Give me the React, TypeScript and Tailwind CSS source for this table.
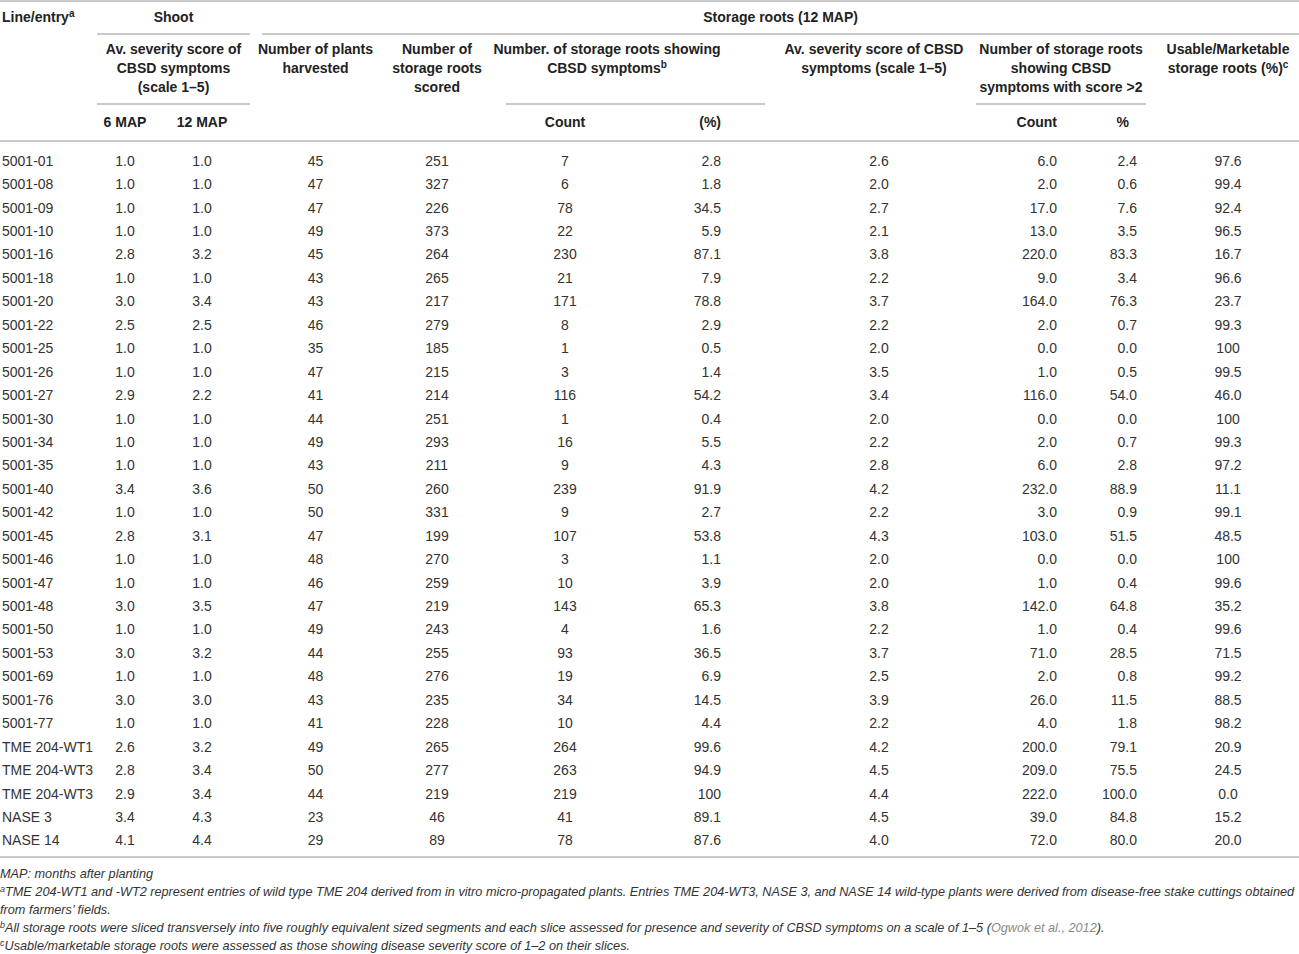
const rows: string[][] = [
  ["5001-01", "1.0", "1.0", "45", "251", "7", "2.8", "2.6", "6.0", "2.4", "97.6"],
  ["5001-08", "1.0", "1.0", "47", "327", "6", "1.8", "2.0", "2.0", "0.6", "99.4"],
  ["5001-09", "1.0", "1.0", "47", "226", "78", "34.5", "2.7", "17.0", "7.6", "92.4"],
  ["5001-10", "1.0", "1.0", "49", "373", "22", "5.9", "2.1", "13.0", "3.5", "96.5"],
  ["5001-16", "2.8", "3.2", "45", "264", "230", "87.1", "3.8", "220.0", "83.3", "16.7"],
  ["5001-18", "1.0", "1.0", "43", "265", "21", "7.9", "2.2", "9.0", "3.4", "96.6"],
  ["5001-20", "3.0", "3.4", "43", "217", "171", "78.8", "3.7", "164.0", "76.3", "23.7"],
  ["5001-22", "2.5", "2.5", "46", "279", "8", "2.9", "2.2", "2.0", "0.7", "99.3"],
  ["5001-25", "1.0", "1.0", "35", "185", "1", "0.5", "2.0", "0.0", "0.0", "100"],
  ["5001-26", "1.0", "1.0", "47", "215", "3", "1.4", "3.5", "1.0", "0.5", "99.5"],
  ["5001-27", "2.9", "2.2", "41", "214", "116", "54.2", "3.4", "116.0", "54.0", "46.0"],
  ["5001-30", "1.0", "1.0", "44", "251", "1", "0.4", "2.0", "0.0", "0.0", "100"],
  ["5001-34", "1.0", "1.0", "49", "293", "16", "5.5", "2.2", "2.0", "0.7", "99.3"],
  ["5001-35", "1.0", "1.0", "43", "211", "9", "4.3", "2.8", "6.0", "2.8", "97.2"],
  ["5001-40", "3.4", "3.6", "50", "260", "239", "91.9", "4.2", "232.0", "88.9", "11.1"],
  ["5001-42", "1.0", "1.0", "50", "331", "9", "2.7", "2.2", "3.0", "0.9", "99.1"],
  ["5001-45", "2.8", "3.1", "47", "199", "107", "53.8", "4.3", "103.0", "51.5", "48.5"],
  ["5001-46", "1.0", "1.0", "48", "270", "3", "1.1", "2.0", "0.0", "0.0", "100"],
  ["5001-47", "1.0", "1.0", "46", "259", "10", "3.9", "2.0", "1.0", "0.4", "99.6"],
  ["5001-48", "3.0", "3.5", "47", "219", "143", "65.3", "3.8", "142.0", "64.8", "35.2"],
  ["5001-50", "1.0", "1.0", "49", "243", "4", "1.6", "2.2", "1.0", "0.4", "99.6"],
  ["5001-53", "3.0", "3.2", "44", "255", "93", "36.5", "3.7", "71.0", "28.5", "71.5"],
  ["5001-69", "1.0", "1.0", "48", "276", "19", "6.9", "2.5", "2.0", "0.8", "99.2"],
  ["5001-76", "3.0", "3.0", "43", "235", "34", "14.5", "3.9", "26.0", "11.5", "88.5"],
  ["5001-77", "1.0", "1.0", "41", "228", "10", "4.4", "2.2", "4.0", "1.8", "98.2"],
  ["TME 204-WT1", "2.6", "3.2", "49", "265", "264", "99.6", "4.2", "200.0", "79.1", "20.9"],
  ["TME 204-WT3", "2.8", "3.4", "50", "277", "263", "94.9", "4.5", "209.0", "75.5", "24.5"],
  ["TME 204-WT3", "2.9", "3.4", "44", "219", "219", "100", "4.4", "222.0", "100.0", "0.0"],
  ["NASE 3", "3.4", "4.3", "23", "46", "41", "89.1", "4.5", "39.0", "84.8", "15.2"],
  ["NASE 14", "4.1", "4.4", "29", "89", "78", "87.6", "4.0", "72.0", "80.0", "20.0"],
];

// per-column cell alignment for body cells
const cellCls = [
  "text-left pl-[2px]",
  "text-center pr-[11px]",
  "text-center pr-[10px]",
  "text-center",
  "text-center",
  "text-center",
  "text-right pr-[44px]",
  "text-center pl-[17px]",
  "text-right pr-[28px]",
  "text-right pr-[9px]",
  "text-center pl-[11px]",
];

const widths = [97, 67, 86, 131, 112, 144, 128, 211, 109, 61, 153];

function Rule({ className = "" }: { className?: string }) {
  return <div className={"h-[2px] bg-[#c9c9c9] " + className} />;
}

export default function App() {
  return (
    <div className="w-[1299px] bg-white text-[#333] font-['Liberation_Sans','Helvetica_Neue',Arial,sans-serif]">
      <Rule />
      <table className="w-[1299px] table-fixed border-separate border-spacing-0">
        <colgroup>
          {widths.map((w, i) => (
            <col key={i} style={{ width: w }} />
          ))}
        </colgroup>
        <thead className="text-[14px] font-bold text-[#222] leading-[19px]">
          <tr>
            <th rowSpan={3} className="p-0 align-top text-left border-b-2 border-[#c9c9c9]">
              <div className="pl-[2px] pt-[6px] whitespace-nowrap">
                Line/entry<sup className="text-[10px] font-bold">a</sup>
              </div>
            </th>
            <th colSpan={2} className="p-0">
              <div className="h-[31px] flex items-center justify-center">Shoot</div>
              <Rule />
            </th>
            <th colSpan={8} className="p-0">
              <div className="h-[31px] flex items-center justify-center pl-[12px]">Storage roots (12 MAP)</div>
              <Rule className="ml-[12px]" />
            </th>
          </tr>
          <tr>
            <th colSpan={2} className="p-0 align-top">
              <div className="h-[68px] pt-[5px] text-center whitespace-nowrap">
                Av. severity score of
                <br />
                CBSD symptoms
                <br />
                (scale 1–5)
              </div>
              <Rule />
            </th>
            <th rowSpan={2} className="p-0 align-top border-b-2 border-[#c9c9c9]">
              <div className="pt-[5px] text-center whitespace-nowrap">
                Number of plants
                <br />
                harvested
              </div>
            </th>
            <th rowSpan={2} className="p-0 align-top border-b-2 border-[#c9c9c9]">
              <div className="pt-[5px] text-center whitespace-nowrap">
                Number of
                <br />
                storage roots
                <br />
                scored
              </div>
            </th>
            <th colSpan={2} className="p-0 align-top">
              <div className="h-[68px] pt-[5px] text-center pr-[44px] whitespace-nowrap">
                Number. of storage roots showing
                <br />
                CBSD symptoms<sup className="text-[10px] font-bold">b</sup>
              </div>
              <Rule className="ml-[13px]" />
            </th>
            <th rowSpan={2} className="p-0 align-top border-b-2 border-[#c9c9c9]">
              <div className="pt-[5px] text-center pl-[7px] whitespace-nowrap">
                Av. severity score of CBSD
                <br />
                symptoms (scale 1–5)
              </div>
            </th>
            <th colSpan={2} className="p-0 align-top">
              <div className="h-[68px] pt-[5px] text-center whitespace-nowrap">
                Number of storage roots
                <br />
                showing CBSD
                <br />
                symptoms with score &gt;2
              </div>
              <Rule />
            </th>
            <th rowSpan={2} className="p-0 align-top border-b-2 border-[#c9c9c9]">
              <div className="pt-[5px] text-center pl-[11px] whitespace-nowrap">
                Usable/Marketable
                <br />
                storage roots (%)<sup className="text-[10px] font-bold">c</sup>
              </div>
            </th>
          </tr>
          <tr>
            <th className="p-0 border-b-2 border-[#c9c9c9]">
              <div className="h-[35px] flex items-center justify-center pr-[11px]">6 MAP</div>
            </th>
            <th className="p-0 border-b-2 border-[#c9c9c9]">
              <div className="h-[35px] flex items-center justify-center pr-[10px]">12 MAP</div>
            </th>
            <th className="p-0 border-b-2 border-[#c9c9c9]">
              <div className="h-[35px] flex items-center justify-center">Count</div>
            </th>
            <th className="p-0 border-b-2 border-[#c9c9c9]">
              <div className="h-[35px] flex items-center justify-end pr-[44px]">(%)</div>
            </th>
            <th className="p-0 border-b-2 border-[#c9c9c9]">
              <div className="h-[35px] flex items-center justify-end pr-[28px]">Count</div>
            </th>
            <th className="p-0 border-b-2 border-[#c9c9c9]">
              <div className="h-[35px] flex items-center justify-end pr-[17px]">%</div>
            </th>
          </tr>
        </thead>
        <tbody className="text-[14px] leading-[16px]">
          <tr>
            <td colSpan={11} className="h-[7px] p-0" />
          </tr>
          {rows.map((r, i) => (
            <tr key={i} className="h-[23.45px]">
              {r.map((v, j) => (
                <td key={j} className={"p-0 whitespace-nowrap " + cellCls[j]}>
                  {v}
                </td>
              ))}
            </tr>
          ))}
          <tr>
            <td colSpan={11} className="h-[4px] p-0" />
          </tr>
        </tbody>
      </table>
      <Rule />
      <div className="pt-[7px] text-[12.7px] leading-[18px] italic text-[#333] whitespace-nowrap">
        <p>MAP: months after planting</p>
        <p>
          <sup className="text-[9px]">a</sup>TME 204-WT1 and -WT2 represent entries of wild type TME 204 derived from in vitro micro-propagated plants. Entries TME 204-WT3, NASE 3, and NASE 14 wild-type plants were derived from disease-free stake cuttings obtained
          <br />
          from farmers’ fields.
        </p>
        <p>
          <sup className="text-[9px]">b</sup>All storage roots were sliced transversely into five roughly equivalent sized segments and each slice assessed for presence and severity of CBSD symptoms on a scale of 1–5 (<span className="text-[#8a8a8a]">Ogwok et al., 2012</span>).
        </p>
        <p>
          <sup className="text-[9px]">c</sup>Usable/marketable storage roots were assessed as those showing disease severity score of 1–2 on their slices.
        </p>
      </div>
    </div>
  );
}
